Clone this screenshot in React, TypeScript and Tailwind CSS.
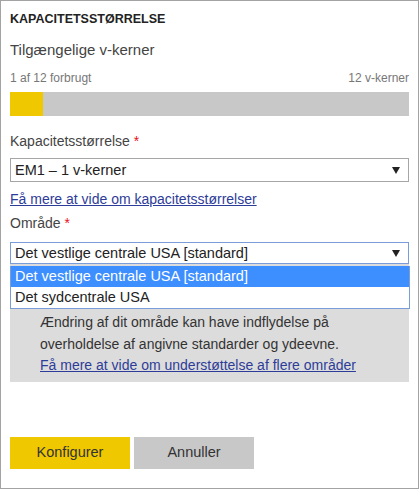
import React from "react";

const FONT = { fontFamily: '"Liberation Sans", Arial, sans-serif' };

function Caret() {
  return (
    <svg width="8" height="7" viewBox="0 0 8 7" className="shrink-0">
      <path d="M0 0 H8 L4 7 Z" fill="#222" />
    </svg>
  );
}

export default function App() {
  return (
    <div
      style={FONT}
      className="relative h-[489px] w-[419px] border border-[#a3a3a3] bg-white px-[9px] text-[#333]"
    >
      <h2 className="pt-[10px] text-[12.5px] font-bold leading-[16px] text-[#222]">
        KAPACITETSSTØRRELSE
      </h2>

      <p className="mt-[13px] text-[15px] leading-[20px] text-[#444]">Tilgængelige v-kerner</p>

      <div className="mt-[10px] flex justify-between text-[12px] leading-[16px] text-[#777]">
        <span>1 af 12 forbrugt</span>
        <span>12 v-kerner</span>
      </div>

      <div className="mt-[6px] flex h-[24px] w-full bg-[#c8c8c8]">
        <div className="w-[33px] bg-[#f0c800]" />
      </div>

      <p className="mt-[15px] text-[14px] leading-[20px] text-[#444]">
        Kapacitetsstørrelse <span className="text-[#e81123]">*</span>
      </p>

      <div className="mt-[7px] flex h-[24px] items-center justify-between border border-[#a6a6a6] pl-[4px] pr-[8px]">
        <span className="text-[14.5px] leading-[20px] text-[#222]">EM1 – 1 v-kerner</span>
        <Caret />
      </div>

      <a className="mt-[7px] block text-[14px] leading-[20px] text-[#2e3c99] underline">
        Få mere at vide om kapacitetsstørrelser
      </a>

      <p className="mt-[4px] text-[14px] leading-[20px] text-[#444]">
        Område <span className="text-[#e81123]">*</span>
      </p>

      <div className="mt-[9px] flex h-[22px] items-center justify-between border border-[#7a9cd9] pl-[4px] pr-[8px]">
        <span className="text-[14.5px] leading-[20px] text-[#222]">Det vestlige centrale USA [standard]</span>
        <Caret />
      </div>

      {/* info panel, its first line lies under the open list */}
      <div className="bg-[#dcdcdc] pb-[7px] pl-[30px] pr-[10px] pt-[47px] text-[14px] leading-[22px] text-[#333]">
        <p>Ændring af dit område kan have indflydelse på overholdelse af angivne standarder og ydeevne.</p>
        <a className="block leading-[20px] text-[#2e3c99] underline">
          Få mere at vide om understøttelse af flere områder
        </a>
      </div>

      <div className="mt-[55px] flex gap-[4px]">
        <button className="h-[32px] w-[120px] bg-[#f0c800] text-[14.5px] text-[#333]">Konfigurer</button>
        <button className="h-[32px] w-[120px] bg-[#c8c8c8] text-[14.5px] text-[#333]">Annuller</button>
      </div>

      {/* open dropdown list */}
      <div className="absolute left-[9px] top-[265px] w-[400px] border border-t-0 border-[#7a9cd9] bg-white text-[14.5px] leading-[21px]">
        <div className="bg-[#3d8eff] pl-[4px] text-white">Det vestlige centrale USA [standard]</div>
        <div className="pl-[4px] text-[#222]">Det sydcentrale USA</div>
      </div>
    </div>
  );
}
